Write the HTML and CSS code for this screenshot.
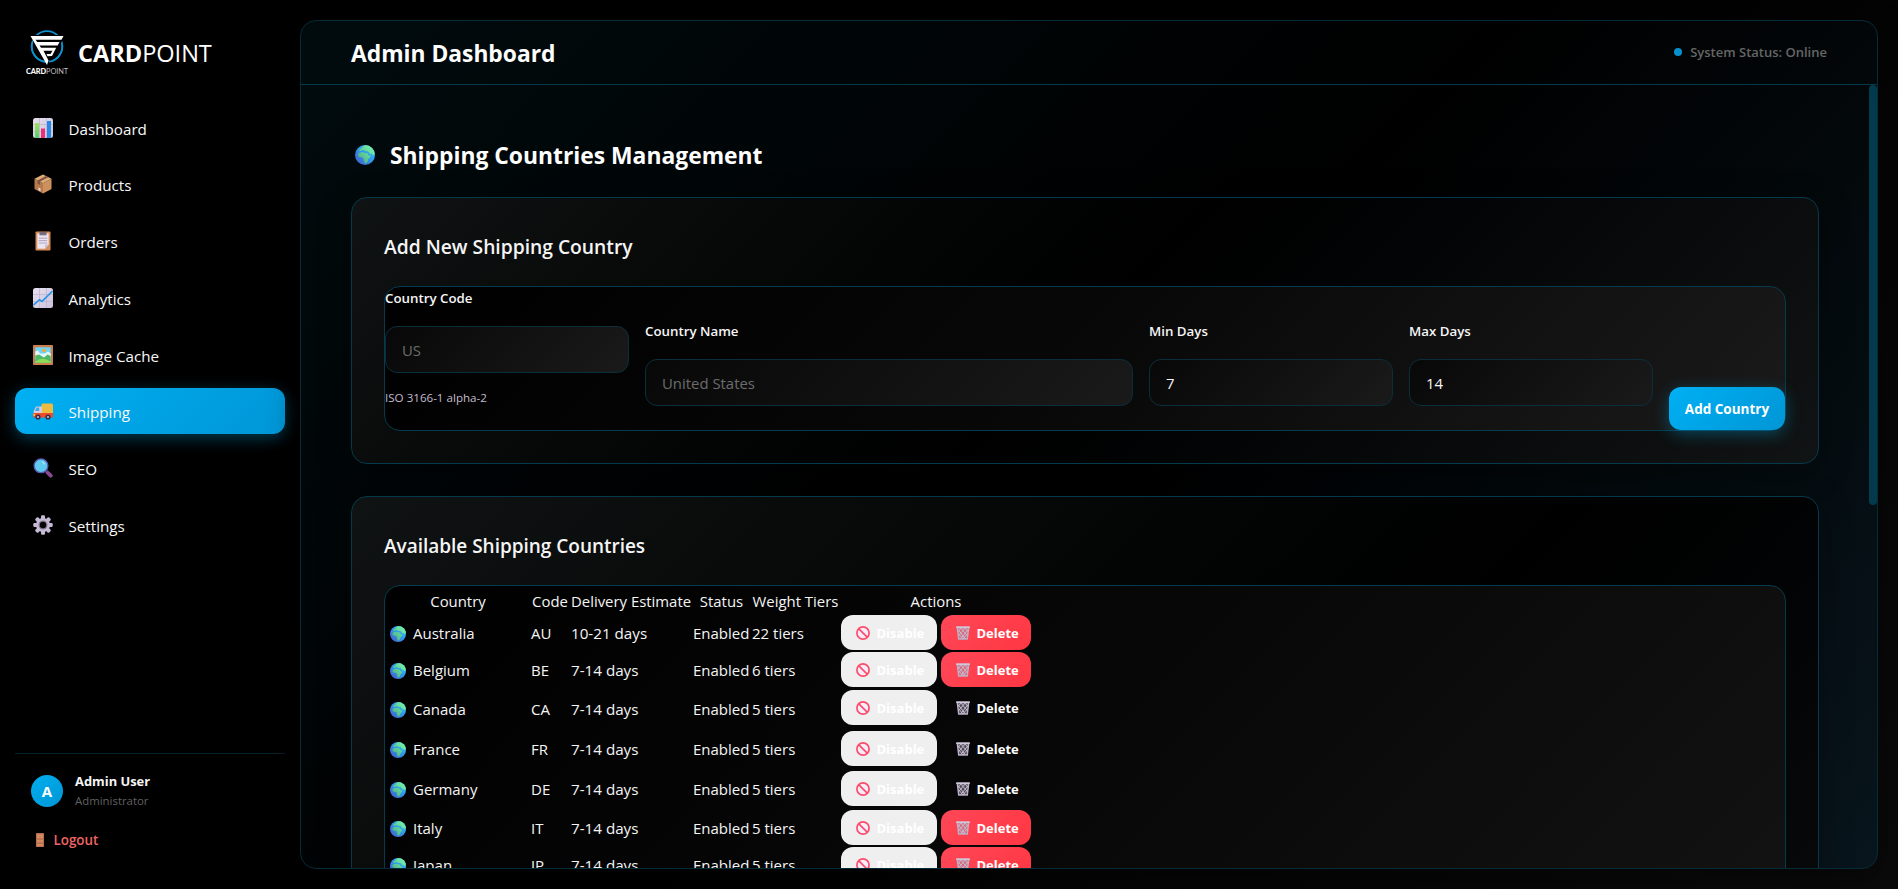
FILE: index.html
```
<!DOCTYPE html>
<html lang="en">
<head>
<meta charset="utf-8">
<title>CardPoint Admin</title>
<link rel="stylesheet" href="styles.css">
</head>
<body>
<svg class="defs" aria-hidden="true">
  <defs>
    <linearGradient id="sea" x1="0" y1="1" x2="1" y2="0"><stop offset="0" stop-color="#4a55c8"/><stop offset=".5" stop-color="#2f96ea"/><stop offset="1" stop-color="#35d0f4"/></linearGradient>
    <linearGradient id="land" x1="0" y1="1" x2="1" y2="0"><stop offset="0" stop-color="#46a684"/><stop offset="1" stop-color="#7dffb0"/></linearGradient>
    <linearGradient id="paper" x1="0" y1="0" x2="1" y2="1"><stop offset="0" stop-color="#e6e0ee"/><stop offset="1" stop-color="#cdc2dc"/></linearGradient>
    <linearGradient id="lime" x1="0" y1="0" x2="0" y2="1"><stop offset="0" stop-color="#a5e05a"/><stop offset="1" stop-color="#4fd06a"/></linearGradient>
    <clipPath id="disc"><circle cx="10" cy="10" r="10"/></clipPath>
    <symbol id="globe" viewBox="0 0 20 20"><g clip-path="url(#disc)"><rect width="20" height="20" fill="url(#sea)"/><path fill="url(#land)" d="M3.200 8.800 5 7.400l3-.3 1.400.8 2.800.1 1.500 2.600 2.100.1-.9 1.800-1.800 1.700-.3 2.200-1.500 1.800-1.400.2-1.300-3.400-.3-2.300-2.800-.4-2.300-.8zM11 0 7.500 1.500l-.5 1.600L4.700 4l-.8 1.700 2.300.4 1.500-1 1.700.5 1.300.9 1.400-.6 1.700 1.100 1.500 2.400 1.300-1.100 1.200 2.100 2.200-1.600L20 9V0z"/></g></symbol>
    <symbol id="chart" viewBox="0 0 20 20"><rect width="20" height="20" rx="2.500" fill="url(#paper)"/><path stroke="#bdb2cc" stroke-width=".7" d="M6.500 0v20M13.500 0v20M0 6.500h20M0 13.500h20"/><path fill="url(#lime)" d="M2 5h4v15H2z"/><path fill="#ee2f78" d="M8 10.500h4V20H8z"/><path fill="#2a8be6" d="M14 3h4v17h-4z"/></symbol>
    <symbol id="box" viewBox="0 0 20 20"><path fill="#b87a4c" d="M1.500 4.800 10 9.300V19.500l-8.500-4.600z"/><path fill="#cd925c" d="M18.500 4.800 10 9.300V19.500l8.500-4.600z"/><path fill="#e0ab76" d="m10 .5 8.500 4.300L10 9.300 1.500 4.800z"/><path fill="#7e5340" d="m12.800 1.900 2.600 1.300-8.300 4.400v3.500l-2.500-1.300V6.400z"/><path fill="#e9dfe8" d="m5.500 13.500 2 1v2.700l-2-1z"/></symbol>
    <symbol id="clip" viewBox="0 0 20 20"><rect x="2.500" y=".5" width="15" height="19" rx="1" fill="#d78d55"/><path fill="#ebe3f1" d="M4.300 2.500h11.400v11L12 17.700H4.300z"/><path fill="#c9bdd6" d="M15.700 13.500 12 17.700v-4.200z"/><path fill="#746b7c" d="M6.500 1h7v3.300h-7z"/><path stroke="#a99fb5" stroke-width=".9" d="M5.800 7.200h8.400M5.800 9.600h8.400M5.800 12h8.400"/></symbol>
    <symbol id="trend" viewBox="0 0 20 20"><rect width="20" height="20" rx="2.500" fill="url(#paper)"/><path stroke="#bdb2cc" stroke-width=".7" d="M6.500 0v20M13.500 0v20M0 6.500h20M0 13.500h20"/><path fill="none" stroke="#3095e4" stroke-width="1.700" d="m.5 17 6-5.300 2.500 1.600L19.500 3"/></symbol>
    <symbol id="frame" viewBox="0 0 20 20"><rect width="20" height="20" rx=".8" fill="#c97f50"/><rect x="2.300" y="2.300" width="15.400" height="15.400" fill="#6fd5f7"/><circle cx="11" cy="5.500" r="1.800" fill="#f5a93a"/><path fill="#e9f7fc" d="M2.300 6.500 5 5.500l2 3h5l3-2 2.700 2v5H2.300z"/><path fill="#4fb96a" d="M2.300 10.500 6 9.500l5 3 3.500-3 3.200 1.500v6.700H2.300z"/><path fill="#8edb55" d="M2.300 16.500Q9 11 17.700 16.500v1.200H2.300z"/></symbol>
    <symbol id="truck" viewBox="0 0 20 20"><path fill="#eebb40" d="M9.500 2.500h9A1.500 1.500 0 0 1 20 4v9H8.500V3.500z"/><path fill="#d8ccdf" d="M3 5.500h6V13H.7V10z"/><path fill="#3aa6e8" d="M3.600 6.500h2.600V10H2z"/><path fill="#ee4b2b" d="M.3 12h19.700v4.500H.3z"/><path fill="#f9c22e" d="M.3 13h1.800v1.800H.3z"/><circle cx="5" cy="16" r="2.600" fill="#3b2d49"/><circle cx="15" cy="16" r="2.600" fill="#3b2d49"/><circle cx="5" cy="16" r="1.100" fill="#cabcd8"/><circle cx="15" cy="16" r="1.100" fill="#cabcd8"/></symbol>
    <symbol id="lens" viewBox="0 0 20 20"><path stroke="#8b4a94" stroke-width="3.800" stroke-linecap="round" d="m14.500 14.500 3.200 3.200"/><path stroke="#4c3d8d" stroke-width="1.800" d="m12 11.500 2 2"/><circle cx="8" cy="7.800" r="6.900" fill="#5fcbee" stroke="#5a5db4" stroke-width="1.300"/><path fill="#b8ecfb" d="M9.500 3.300a4 4 0 0 1 2.500 3l-1 .2a4 4 0 0 0-2-2.300z"/></symbol>
    <symbol id="gear" viewBox="0 0 20 20"><g fill="#c6bad5"><rect x="8" y=".3" width="4" height="19.400" rx="1.200"/><rect x="8" y=".3" width="4" height="19.400" rx="1.200" transform="rotate(45 10 10)"/><rect x="8" y=".3" width="4" height="19.400" rx="1.200" transform="rotate(90 10 10)"/><rect x="8" y=".3" width="4" height="19.400" rx="1.200" transform="rotate(135 10 10)"/><circle cx="10" cy="10" r="7"/></g><circle cx="10" cy="10" r="4.500" fill="#83768f"/><circle cx="10" cy="10" r="3.200" fill="#050505"/></symbol>
    <symbol id="door" viewBox="0 0 8 14"><rect width="8" height="14" rx=".5" fill="#b86f4a"/><path fill="#d08a62" d="M1 1.200h6v4H1zM1 6.800h6v2.700H1zM1 11h6v2H1z"/></symbol>
    <symbol id="ban" viewBox="0 0 14 14"><circle cx="7" cy="7" r="6.100" fill="#f7ecf8" stroke="#fb4d6b" stroke-width="1.700"/><path stroke="#fb4d6b" stroke-width="1.700" d="m2.800 2.800 8.400 8.400"/></symbol>
    <symbol id="bin" viewBox="0 0 14 14"><path fill="#a99fb5" fill-opacity=".45" stroke="#b9afc6" stroke-width="1.400" d="M1.300 1.500 2.700 13h8.600l1.400-11.500z"/><path fill="none" stroke="#c4bbd0" stroke-width="1" d="M2 3.500 9.500 13M4.500 1.500 11.700 10M8.500 1.500l4 4.500M12 3.500 4.500 13M9.500 1.500 2.300 10M5.500 1.500l-4 4.500M2.500 7.500 7 13M11.500 7.500 7 13"/><path stroke="#d1c8db" stroke-width="1.700" d="M.2 1.200h13.600"/></symbol>
  </defs>
</svg>
<div class="app">
  <aside class="sidebar">
    <div class="brand">
      <div class="logo">
        <svg class="logo-mark" viewBox="0 0 34 36"><circle cx="17" cy="16.500" r="15.300" fill="none" stroke="#0c93cf" stroke-width="1.700"/><path fill="#000" d="M-1 5h36L21 33h-4z"/><path fill="none" stroke="#0c93cf" stroke-width="1.700" d="M2.100 13a15.300 15.300 0 0 0 13 18.700M31.900 13a15.300 15.300 0 0 1-13 18.700"/><path fill="#fff" d="M.5 6h33l-2 3.700H5.500l1.800 2.400h22.200L27.700 15.500H9.500l1.600 2.300h15.100L22 26l-4.500.200-1-2.200h4l2-3.300h-9l5 9.700L17 35z"/></svg>
        <span class="logo-word"><b>CARD</b>POINT</span>
      </div>
      <span class="brand-name"><b>CARD</b>POINT</span>
    </div>
    <nav class="nav">
      <a class="nav-item"><svg><use href="#chart"/></svg><span>Dashboard</span></a>
      <a class="nav-item"><svg><use href="#box"/></svg><span>Products</span></a>
      <a class="nav-item"><svg><use href="#clip"/></svg><span>Orders</span></a>
      <a class="nav-item"><svg><use href="#trend"/></svg><span>Analytics</span></a>
      <a class="nav-item"><svg><use href="#frame"/></svg><span>Image Cache</span></a>
      <a class="nav-item active"><svg><use href="#truck"/></svg><span>Shipping</span></a>
      <a class="nav-item"><svg><use href="#lens"/></svg><span>SEO</span></a>
      <a class="nav-item"><svg><use href="#gear"/></svg><span>Settings</span></a>
    </nav>
    <div class="account">
      <div class="user">
        <div class="avatar">A</div>
        <div><div class="user-name">Admin User</div><div class="user-role">Administrator</div></div>
      </div>
      <a class="logout"><svg><use href="#door"/></svg>Logout</a>
    </div>
  </aside>
  <main class="panel">
    <header class="topbar">
      <h1>Admin Dashboard</h1>
      <div class="status"><i></i>System Status: Online</div>
    </header>
    <div class="body">
      <div class="content">
        <h2 class="section-title"><svg><use href="#globe"/></svg><span>Shipping Countries Management</span></h2>
        <section class="card">
          <h3 class="add-title">Add New Shipping Country</h3>
          <form class="add-form">
            <div class="field"><label>Country Code</label><input placeholder="US"><small>ISO 3166-1 alpha-2</small></div>
            <div class="field"><label>Country Name</label><input placeholder="United States"></div>
            <div class="field"><label>Min Days</label><input value="7"></div>
            <div class="field"><label>Max Days</label><input value="14"></div>
            <button type="button" class="add-btn">Add Country</button>
          </form>
        </section>
        <section class="card">
          <h3>Available Shipping Countries</h3>
          <div class="table-box">
            <table>
              <colgroup><col class="c1"><col class="c2"><col class="c3"><col class="c4"><col class="c5"><col class="c6"></colgroup>
              <thead><tr><th>Country</th><th>Code</th><th>Delivery Estimate</th><th>Status</th><th>Weight Tiers</th><th>Actions</th></tr></thead>
              <tbody>
                <tr><td><svg class="flag"><use href="#globe"/></svg>Australia</td><td>AU</td><td>10-21 days</td><td>Enabled</td><td>22 tiers</td><td><div class="actions"><span class="btn off"><svg><use href="#ban"/></svg>Disable</span><span class="btn del"><svg><use href="#bin"/></svg>Delete</span></div></td></tr>
                <tr><td><svg class="flag"><use href="#globe"/></svg>Belgium</td><td>BE</td><td>7-14 days</td><td>Enabled</td><td>6 tiers</td><td><div class="actions"><span class="btn off"><svg><use href="#ban"/></svg>Disable</span><span class="btn del"><svg><use href="#bin"/></svg>Delete</span></div></td></tr>
                <tr class="h39"><td><svg class="flag"><use href="#globe"/></svg>Canada</td><td>CA</td><td>7-14 days</td><td>Enabled</td><td>5 tiers</td><td><div class="actions"><span class="btn off"><svg><use href="#ban"/></svg>Disable</span><span class="btn ghost"><svg><use href="#bin"/></svg>Delete</span></div></td></tr>
                <tr class="h37"><td><svg class="flag"><use href="#globe"/></svg>France</td><td>FR</td><td>7-14 days</td><td>Enabled</td><td>5 tiers</td><td><div class="actions"><span class="btn off"><svg><use href="#ban"/></svg>Disable</span><span class="btn ghost"><svg><use href="#bin"/></svg>Delete</span></div></td></tr>
                <tr class="h39 even"><td><svg class="flag"><use href="#globe"/></svg>Germany</td><td>DE</td><td>7-14 days</td><td>Enabled</td><td>5 tiers</td><td><div class="actions"><span class="btn off"><svg><use href="#ban"/></svg>Disable</span><span class="btn ghost"><svg><use href="#bin"/></svg>Delete</span></div></td></tr>
                <tr><td><svg class="flag"><use href="#globe"/></svg>Italy</td><td>IT</td><td>7-14 days</td><td>Enabled</td><td>5 tiers</td><td><div class="actions"><span class="btn off"><svg><use href="#ban"/></svg>Disable</span><span class="btn del"><svg><use href="#bin"/></svg>Delete</span></div></td></tr>
                <tr><td><svg class="flag"><use href="#globe"/></svg>Japan</td><td>JP</td><td>7-14 days</td><td>Enabled</td><td>5 tiers</td><td><div class="actions"><span class="btn off"><svg><use href="#ban"/></svg>Disable</span><span class="btn del"><svg><use href="#bin"/></svg>Delete</span></div></td></tr>
              </tbody>
            </table>
          </div>
        </section>
      </div>
      <div class="scrollbar"><div class="thumb"></div></div>
    </div>
  </main>
</div>
</body>
</html>
```
FILE: styles.css
```
* { box-sizing: border-box; }
body { margin: 0; height: 889px; overflow: hidden; color: #f5f5f5; font: 15px/24px "Open Sans", "Noto Sans", sans-serif; background: linear-gradient(135deg, #000 0%, #000 50%, #0a0a0a 100%); }
h1, h2, h3 { margin: 0; }
.defs { position: absolute; width: 0; height: 0; }
.app { display: flex; height: 889px; padding: 20px 20px 20px 0; }

/* Sidebar */
.sidebar { width: 300px; flex: none; display: flex; flex-direction: column; padding: 0 15px; }
.brand { display: flex; align-items: center; height: 66px; padding-left: 11px; }
.logo { display: flex; flex-direction: column; align-items: center; width: 42px; margin-right: 10px; }
.logo-mark { width: 34px; height: 36px; display: block; }
.logo-word { font: 400 7.400px/9px "Lato", sans-serif; color: #bbb; margin-top: 1px; letter-spacing: -.1px; }
.logo-word b { font-weight: 900; color: #fff; }
.brand-name { font-size: 23.600px; line-height: 32px; color: #fff; letter-spacing: -.05px; }
.nav { display: flex; flex-direction: column; gap: 10.750px; padding-top: 18.500px; }
.nav-item { display: flex; align-items: center; gap: 15.500px; height: 46px; padding: 0 18px; border-radius: 12px; font-size: 15.200px; color: #f8f8f8; }
.nav-item span { padding-top: 2px; }
.nav-item svg { width: 20px; height: 20px; }
.nav-item.active { background: linear-gradient(135deg, #00b0f3, #0096d6); box-shadow: 0 4px 16px rgba(0, 174, 239, .35); }
.account { margin-top: auto; height: 116px; border-top: 1px solid #04202a; padding: 21px 16px 0; }
.user { display: flex; align-items: center; gap: 12px; height: 32px; }
.avatar { width: 32px; height: 32px; border-radius: 50%; background: linear-gradient(135deg, #00aeef, #0096d6); color: #fff; font-weight: 700; font-size: 15px; line-height: 33px; text-align: center; }
.user-name { font-size: 12.900px; font-weight: 700; line-height: 20px; }
.user-role { font-size: 11.400px; line-height: 20px; color: #606060; }
.logout { display: flex; align-items: center; gap: 9.500px; padding-left: 5px; margin-top: 21px; font-size: 13.400px; line-height: 24px; font-weight: 600; color: #ee6464; }
.logout svg { width: 8px; height: 14px; }

/* Main panel */
.panel { flex: 1; height: 849px; display: flex; flex-direction: column; border: 1px solid #052b39; border-radius: 16px; overflow: hidden; background: linear-gradient(135deg, #010b0e 0%, #000 50%, #08151c 100%); box-shadow: 0 8px 32px rgba(0, 0, 0, .4); }
.topbar { flex: none; display: flex; align-items: center; justify-content: space-between; height: 64px; border-bottom: 1px solid #053a4b; padding: 0 50px; }
.topbar h1 { font-size: 22.800px; line-height: 32px; color: #fff; padding-top: 2px; }
.status { display: flex; align-items: center; gap: 8.500px; font-size: 13px; font-weight: 600; color: #666; margin-top: -2px; }
.status i { width: 8px; height: 8px; border-radius: 50%; background: #0590cc; }
.body { flex: 1; min-height: 0; display: flex; }
.content { flex: 1; min-width: 0; padding: 50px 50px 0; }
.scrollbar { width: 8px; }
.thumb { height: 420px; border-radius: 4px; background: #033b4d; }
.section-title { display: flex; align-items: center; gap: 15px; height: 40px; padding-left: 4px; margin-bottom: 22px; font-size: 22.850px; color: #fff; }
.section-title span { padding-top: 2px; }
.section-title svg { width: 20px; height: 20px; }
.card { border: 1px solid #05394b; border-radius: 16px; padding: 32px; margin-bottom: 32px; background: linear-gradient(135deg, #101313 0%, #020303 38%, #000 50%, #020304 62%, #111414 100%); box-shadow: 0 8px 32px rgba(0, 0, 0, .35); }
.card h3 { font-size: 19px; line-height: 32px; font-weight: 600; padding-top: 1px; margin-bottom: 23px; letter-spacing: -.02px; }
.card .add-title { font-size: 19.300px; }
.card + .card { height: 999px; }

/* Add country form */
.add-form { display: grid; grid-template-columns: 1fr 2fr 1fr 1fr 116px; gap: 16px; align-items: end; height: 145px; border: 1px solid #053b4e; border-radius: 16px; background: linear-gradient(135deg, #000, #080808 50%, #1a1a1a); }
.field { display: flex; flex-direction: column; margin-bottom: 24px; }
.field label { font-size: 13.300px; line-height: 22px; font-weight: 600; margin-bottom: 17px; }
.field input { width: 100%; height: 47px; padding: 1px 16px 0; border: 1px solid #0a2f3b; border-radius: 12px; background: linear-gradient(135deg, #080808, #1a1a1a); color: #f5f5f5; font: 14.900px "Open Sans", sans-serif; }
.field input::placeholder { color: #6c6c6c; }
.field small { font-size: 11.600px; line-height: 18px; padding-top: 1px; margin: 15px 0 -1px; color: #c3bccd; }
.add-btn { height: 43px; border: 0; border-radius: 12px; padding: 1px 0 0; background: linear-gradient(135deg, #00b0f3, #0096d6); box-shadow: 0 4px 16px rgba(0, 174, 239, .35); color: #fff; font: 700 13.500px "Open Sans", sans-serif; }

/* Countries table */
.table-box { height: 877px; border: 1px solid #053b4e; border-radius: 16px; background: linear-gradient(135deg, #000, #080808 40%, #1a1a1a); }
table { table-layout: fixed; width: 648px; border-spacing: 2px; }
.c1 { width: 142px; }
.c2 { width: 38px; }
.c3 { width: 120px; }
.c4 { width: 57px; }
.c5 { width: 87px; }
.c6 { width: 190px; }
th { height: 25px; padding: 0; font-weight: 400; white-space: nowrap; font-size: 14.900px; }
td { height: 35px; padding: 0; vertical-align: middle; white-space: nowrap; line-height: 24px; }
td:nth-child(3) { font-size: 15.200px; }
.h39 td { height: 39px; }
.h37 td { height: 37px; }
.flag { width: 16px; height: 16px; margin: 0 7px 0 3px; vertical-align: -3px; }
.actions { display: flex; gap: 4px; height: 35px; }
.h39 .actions { margin-bottom: 2px; }
.h39.even .actions { margin-bottom: 0; }
.btn { display: flex; align-items: center; gap: 6.500px; height: 35px; padding: 0 0 0 15px; border-radius: 12px; color: #fff; font-size: 13px; font-weight: 700; }
.btn svg { width: 14px; height: 14px; }
.off { width: 96px; background: #efefef; }
.del { width: 90px; background: linear-gradient(135deg, #ff4757, #ff3742); }
.ghost { width: 90px; }
```
